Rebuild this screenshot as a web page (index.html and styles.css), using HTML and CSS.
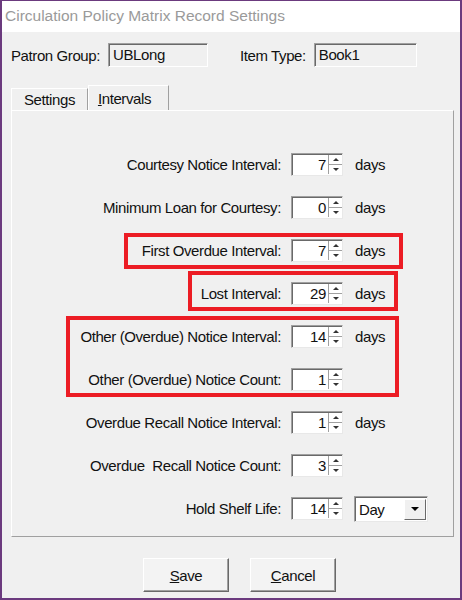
FILE: index.html
```html
<!DOCTYPE html>
<html lang="en">
<head>
  <meta charset="UTF-8" />
  <title>Circulation Policy Matrix Record Settings</title>
  <link rel="stylesheet" href="styles.css">
</head>
<body>
<div class="window">
  <div class="titlebar">Circulation Policy Matrix Record Settings</div>

  <div class="header">
    <span class="hlabel">Patron Group:</span>
    <div class="field patron">UBLong</div>
    <span class="hlabel item-label">Item Type:</span>
    <div class="field item">Book1</div>
  </div>

  <div class="tabs">
    <div class="tab">Settings</div>
    <div class="tab active"><u>I</u>ntervals</div>
  </div>

  <div class="panel">
    <div class="row">
      <label>Courtesy Notice Interval:</label>
      <div class="spin"><span class="val">7</span><span class="arrows"><i class="up"></i><i class="down"></i></span></div>
      <span class="unit">days</span>
    </div>
    <div class="row">
      <label>Minimum Loan for Courtesy:</label>
      <div class="spin"><span class="val">0</span><span class="arrows"><i class="up"></i><i class="down"></i></span></div>
      <span class="unit">days</span>
    </div>
    <div class="row">
      <label>First Overdue Interval:</label>
      <div class="spin"><span class="val">7</span><span class="arrows"><i class="up"></i><i class="down"></i></span></div>
      <span class="unit">days</span>
    </div>
    <div class="row">
      <label>Lost Interval:</label>
      <div class="spin"><span class="val">29</span><span class="arrows"><i class="up"></i><i class="down"></i></span></div>
      <span class="unit">days</span>
    </div>
    <div class="row">
      <label>Other (Overdue) Notice Interval:</label>
      <div class="spin"><span class="val">14</span><span class="arrows"><i class="up"></i><i class="down"></i></span></div>
      <span class="unit">days</span>
    </div>
    <div class="row">
      <label>Other (Overdue) Notice Count:</label>
      <div class="spin"><span class="val">1</span><span class="arrows"><i class="up"></i><i class="down"></i></span></div>
    </div>
    <div class="row">
      <label>Overdue Recall Notice Interval:</label>
      <div class="spin"><span class="val">1</span><span class="arrows"><i class="up"></i><i class="down"></i></span></div>
      <span class="unit">days</span>
    </div>
    <div class="row">
      <label>Overdue&nbsp; Recall Notice Count:</label>
      <div class="spin"><span class="val">3</span><span class="arrows"><i class="up"></i><i class="down"></i></span></div>
    </div>
    <div class="row">
      <label>Hold Shelf Life:</label>
      <div class="spin"><span class="val">14</span><span class="arrows"><i class="up"></i><i class="down"></i></span></div>
      <div class="combo"><span class="combo-text">Day</span><span class="combo-btn"><i></i></span></div>
    </div>

    <!-- annotation boxes drawn over the dialog -->
    <div class="mark mark-first"></div>
    <div class="mark mark-lost"></div>
    <div class="mark mark-other"></div>
  </div>

  <div class="buttons">
    <button><u>S</u>ave</button>
    <button><u>C</u>ancel</button>
  </div>
</div>
</body>
</html>
```

FILE: styles.css
```css
body {
  margin: 0;
  font-family: "Liberation Sans", Arial, sans-serif;
  font-size: 15px;
  letter-spacing: -0.4px;
  color: #111;
  background: #fff;
}
.window {
  width: 462px;
  height: 600px;
  box-sizing: border-box;
  border: 2px solid #6b3a7e;
  border-top-width: 1px;
  background: #f0f0f0;
}
.titlebar {
  height: 31px;
  line-height: 30px;
  padding-left: 3px;
  background: #fff;
  color: #9a9a9a;
  font-size: 15.5px;
  letter-spacing: 0;
}
.header {
  display: flex;
  align-items: center;
  margin-top: 11px;
  padding-left: 9px;
}
.hlabel {
  margin-right: 8px;
}
.item-label {
  margin-left: 32px;
}
.field {
  height: 24px;
  box-sizing: border-box;
  line-height: 21px;
  padding-left: 4px;
  border: 1px solid;
  border-color: #a0a0a0 #fff #fff #a0a0a0;
  box-shadow: inset 1px 1px 0 #696969;
  background: #f0f0f0;
}
.patron { width: 100px; }
.item { width: 103px; }

.tabs {
  display: flex;
  align-items: flex-end;
  margin-top: 18px;
  padding-left: 9px;
  height: 25px;
}
.tab {
  height: 22px;
  box-sizing: border-box;
  width: 77px;
  text-align: center;
  line-height: 22px;
  border: 1px solid;
  border-color: #fff #a0a0a0 transparent #fff;
  border-bottom: 0;
}
.tab.active {
  height: 26px;
  width: 81px;
  margin-bottom: -1px;
  position: relative;
  background: #f0f0f0;
  line-height: 26px;
  padding-right: 8px;
}

.panel {
  position: relative;
  margin: 0 6px 0 9px;
  height: 427px;
  box-sizing: border-box;
  border: 1px solid;
  border-color: #fff #a0a0a0 #a0a0a0 #fff;
  padding-top: 32px;
}
.row {
  display: grid;
  grid-template-columns: 279px 52px auto;
  align-items: center;
  height: 43px;
}
.row label {
  text-align: right;
  padding-right: 10px;
  white-space: nowrap;
}
.spin {
  display: flex;
  height: 23px;
  box-sizing: border-box;
  border: 1px solid;
  border-color: #a0a0a0 #e8e8e8 #e8e8e8 #a0a0a0;
  box-shadow: inset 1px 1px 0 #696969;
  background: #fff;
}
.val {
  flex: 1;
  text-align: right;
  padding-right: 2px;
  line-height: 22px;
}
.arrows {
  display: flex;
  flex-direction: column;
  width: 13px;
  margin: 1px 0 1px 0;
  border-left: 1px solid #a0a0a0;
}
.arrows i {
  flex: 1;
  display: flex;
  align-items: center;
  justify-content: center;
}
.arrows i.up {
  border-bottom: 1px solid #a0a0a0;
}
.arrows i::before {
  content: "";
  border-left: 3px solid transparent;
  border-right: 3px solid transparent;
}
.arrows i.up::before {
  border-bottom: 3px solid #333;
}
.arrows i.down::before {
  border-top: 3px solid #333;
}
.unit {
  margin-left: 12px;
}

.combo {
  display: flex;
  margin-left: 11px;
  width: 74px;
  height: 26px;
  box-sizing: border-box;
  border: 1px solid;
  border-color: #a0a0a0 #e8e8e8 #e8e8e8 #a0a0a0;
  box-shadow: inset 1px 1px 0 #696969;
  background: #fff;
}
.combo-text {
  flex: 1;
  padding-left: 4px;
  line-height: 25px;
}
.combo-btn {
  width: 22px;
  margin: 2px 1px 1px 0;
  box-sizing: border-box;
  display: flex;
  align-items: center;
  justify-content: center;
  background: #f0f0f0;
  border: 1px solid;
  border-color: #fff #696969 #696969 #fff;
}
.combo-btn i {
  border-left: 4px solid transparent;
  border-right: 4px solid transparent;
  border-top: 4px solid #000;
}

.mark {
  position: absolute;
  border: 4px solid #ec1c24;
  box-sizing: border-box;
}
.mark-first { left: 112px; top: 122px; width: 279px; height: 36px; }
.mark-lost { left: 176px; top: 160px; width: 210px; height: 40px; }
.mark-other { left: 54px; top: 205px; width: 333px; height: 81px; }

.buttons {
  display: flex;
  gap: 21px;
  margin-top: 21px;
  padding-left: 141px;
}
.buttons button {
  width: 86px;
  height: 34px;
  font-family: "Liberation Sans", Arial, sans-serif;
  font-size: 15px;
  letter-spacing: -0.4px;
  color: #111;
  background: #f3f3f3;
  border: 1px solid;
  border-color: #fff #696969 #696969 #fff;
  box-shadow: inset -1px -1px 0 #a0a0a0;
  padding: 0;
}
```
